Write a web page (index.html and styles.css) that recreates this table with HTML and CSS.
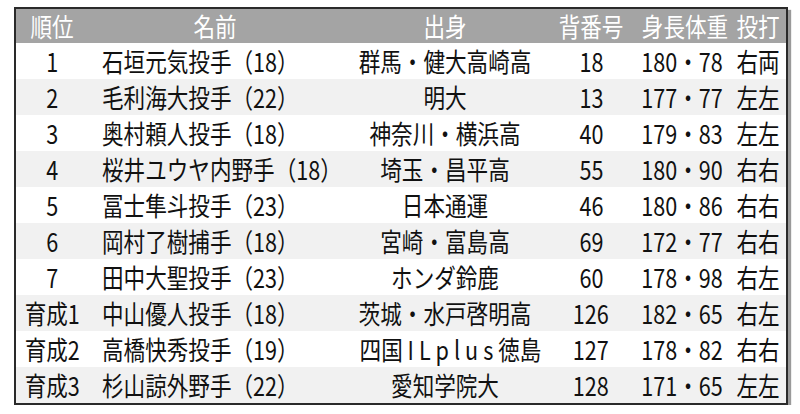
FILE: index.html
```html
<!DOCTYPE html>
<html lang="ja">
<head>
<meta charset="utf-8">
<link rel="stylesheet" href="styles.css">
</head>
<body>
<table class="roster">
  <colgroup>
    <col class="c-rank"><col class="c-name"><col class="c-from"><col class="c-num"><col class="c-body"><col class="c-hand">
  </colgroup>
  <thead>
    <tr><th><span>順位</span></th><th><span>名前</span></th><th><span>出身</span></th><th><span>背番号</span></th><th><span>身長体重</span></th><th><span>投打</span></th></tr>
  </thead>
  <tbody>
    <tr><td><span>1</span></td><td class="name"><span>石垣元気投手（18）</span></td><td><span>群馬・健大高崎高</span></td><td><span>18</span></td><td><span>180・78</span></td><td><span>右両</span></td></tr>
    <tr><td><span>2</span></td><td class="name"><span>毛利海大投手（22）</span></td><td><span>明大</span></td><td><span>13</span></td><td><span>177・77</span></td><td><span>左左</span></td></tr>
    <tr><td><span>3</span></td><td class="name"><span>奥村頼人投手（18）</span></td><td><span>神奈川・横浜高</span></td><td><span>40</span></td><td><span>179・83</span></td><td><span>左左</span></td></tr>
    <tr><td><span>4</span></td><td class="name"><span>桜井ユウヤ内野手（18）</span></td><td><span>埼玉・昌平高</span></td><td><span>55</span></td><td><span>180・90</span></td><td><span>右右</span></td></tr>
    <tr><td><span>5</span></td><td class="name"><span>冨士隼斗投手（23）</span></td><td><span>日本通運</span></td><td><span>46</span></td><td><span>180・86</span></td><td><span>右右</span></td></tr>
    <tr><td><span>6</span></td><td class="name"><span>岡村了樹捕手（18）</span></td><td><span>宮崎・富島高</span></td><td><span>69</span></td><td><span>172・77</span></td><td><span>右右</span></td></tr>
    <tr><td><span>7</span></td><td class="name"><span>田中大聖投手（23）</span></td><td><span>ホンダ鈴鹿</span></td><td><span>60</span></td><td><span>178・98</span></td><td><span>右左</span></td></tr>
    <tr><td><span>育成1</span></td><td class="name"><span>中山優人投手（18）</span></td><td><span>茨城・水戸啓明高</span></td><td><span>126</span></td><td><span>182・65</span></td><td><span>右左</span></td></tr>
    <tr><td><span>育成2</span></td><td class="name"><span>高橋快秀投手（19）</span></td><td><span>四国 <span class="latin">ILplus</span>徳島</span></td><td><span>127</span></td><td><span>178・82</span></td><td><span>右右</span></td></tr>
    <tr><td><span>育成3</span></td><td class="name"><span>杉山諒外野手（22）</span></td><td><span>愛知学院大</span></td><td><span>128</span></td><td><span>171・65</span></td><td><span>左左</span></td></tr>
  </tbody>
</table>
</body>
</html>
```
FILE: styles.css
```css
html, body {
  margin: 0;
  padding: 0;
  background: #ffffff;
}
body {
  padding: 7px 0 0 14px;
  font-family: "Noto Sans CJK JP", "Noto Sans", sans-serif;
}
.roster {
  width: 772px;
  border-collapse: collapse;
  table-layout: fixed;
  border: 2px solid #2a2a2a;
  box-shadow: 3px 3px 1px #9a9a9a;
  color: #111111;
  font-size: 26px;
}
.c-rank { width: 74px; }
.c-name { width: 252px; }
.c-from { width: 208px; }
.c-num { width: 84px; }
.c-body { width: 98px; }
.c-hand { width: 56px; }
.roster th,
.roster td {
  padding: 0;
  text-align: center;
  white-space: nowrap;
  overflow: visible;
  line-height: 1;
}
.roster th {
  height: 34px;
  background: #a4a4a4;
  color: #ffffff;
  font-weight: normal;
}
.roster td {
  height: 36px;
}
.roster tbody tr:nth-child(even) td {
  background: #f1f1f1;
}
.roster th > span,
.roster td > span {
  display: inline-block;
  transform: scaleX(0.83);
  transform-origin: center;
}
.roster td.name {
  text-align: left;
  padding-left: 13px;
}
.roster td.name > span {
  transform-origin: left center;
}
.roster .latin {
  letter-spacing: 6px;
}
```
